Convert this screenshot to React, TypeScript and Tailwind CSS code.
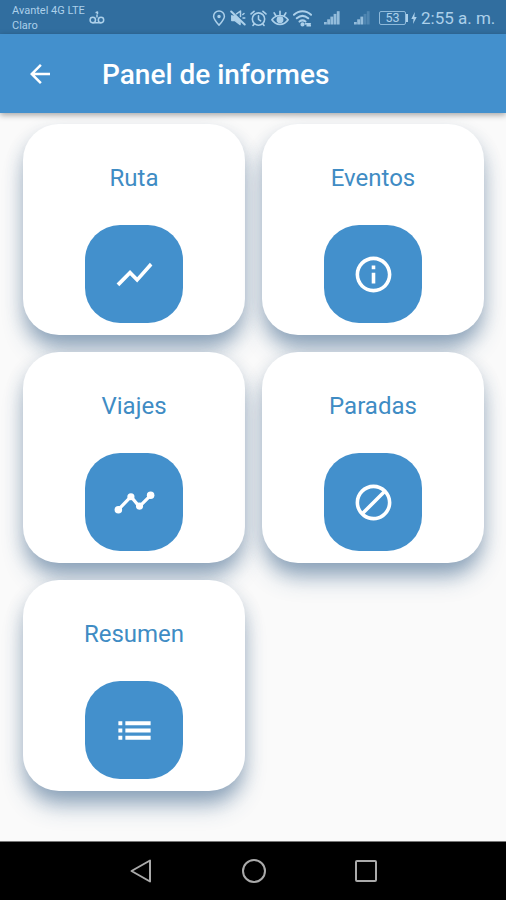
import type { ReactNode } from 'react';
import { MdArrowBack, MdDoNotDisturbAlt, MdInfoOutline, MdShowChart } from 'react-icons/md';

const TimelineIcon = ({ className }: { className: string }) => (
  <svg viewBox="0 0 24 24" className={className} fill="currentColor">
    <path d="M3 16l7-7.300 4.700 5.600L21 8" fill="none" stroke="currentColor" strokeWidth="1.8" strokeLinejoin="round" />
    <circle cx="3" cy="16" r="2.1" />
    <circle cx="10" cy="8.8" r="2" />
    <circle cx="14.8" cy="14" r="2" />
    <circle cx="21" cy="8" r="2.1" />
  </svg>
);

const ListIcon = ({ className }: { className: string }) => (
  <svg viewBox="0 0 24 24" className={className} fill="currentColor">
    <path d="M3 6.850h2.200v2.200H3zM3 10.900h2.200v2.200H3zM3 14.950h2.200v2.200H3zM6.900 6.850H21v2.200H6.900zM6.900 10.900H21v2.200H6.900zM6.900 14.950H21v2.200H6.900z" />
  </svg>
);

const reports = [
  { title: 'Ruta', icon: MdShowChart },
  { title: 'Eventos', icon: MdInfoOutline },
  { title: 'Viajes', icon: TimelineIcon },
  { title: 'Paradas', icon: MdDoNotDisturbAlt },
  { title: 'Resumen', icon: ListIcon },
];

const StatusIcon = ({ className, children }: { className: string; children: ReactNode }) => (
  <svg
    viewBox="0 0 16 16"
    className={`shrink-0 ${className}`}
    fill="none"
    stroke="currentColor"
    strokeWidth="1.5"
    strokeLinecap="round"
    strokeLinejoin="round"
  >
    {children}
  </svg>
);

const SignalBars = ({ level }: { level: number }) => (
  <svg viewBox="0 0 18 16" className="h-4 w-[18px] shrink-0" fill="currentColor">
    {[0, 1, 2, 3, 4].map((i) => (
      <rect key={i} x={1 + i * 3.2} y={12 - i * 2.7} width="2.8" height={2.5 + i * 2.7} opacity={i < level ? 0.8 : 0.25} />
    ))}
  </svg>
);

const StatusBar = () => (
  <div className="flex h-[34px] shrink-0 items-start bg-[#316e9f] text-[#acd0ea]">
    <div className="ml-3 mt-[3px] w-[76px] whitespace-nowrap text-[11px] leading-[15px]">
      <div>Avantel 4G LTE</div>
      <div>Claro</div>
    </div>
    {/* voicemail */}
    <StatusIcon className="ml-px mt-[9px] size-4">
      <circle cx="3.8" cy="11" r="2.7" />
      <circle cx="12" cy="11" r="2.7" />
      <path d="M3.8 13.7H12M8 8V6M7.2 3.5l1.3-.5v1.6" />
    </StatusIcon>
    <div className="ml-[106px] mt-[9px] flex h-[18px] items-center">
      <StatusIcon className="size-4">
        <path d="M8 15.2C5 11.7 2.6 9 2.6 6.4a5.4 5.4 0 0 1 10.8 0C13.4 9 11 11.7 8 15.2z" />
        <circle cx="8" cy="6.5" r="1" fill="currentColor" />
      </StatusIcon>
      <StatusIcon className="ml-[3px] size-4">
        <path d="M1.2 1.5l13.5 13" strokeWidth="2" />
        <path d="M6.5 3.8L10.5 1v5.5M1.8 5.8v4.7h3l5.2 4V11M12.8 4.5l1.2-1M13 8h1.8" />
        <path d="M2 5.5h3L10 10v4l-5-3.5H2z" fill="currentColor" stroke="none" />
      </StatusIcon>
      <StatusIcon className="ml-[4px] size-[17px]">
        <circle cx="8" cy="8.5" r="5.8" />
        <path d="M8 5.5v3.3l2 1.4M1 3.7l2.8-2.4M15 3.7l-2.8-2.4M3.8 13.3l-1 1.2M12.2 13.3l1 1.2" />
      </StatusIcon>
      <StatusIcon className="ml-[4px] size-[18px]">
        <path d="M.8 9.5C4.5 4.5 11.5 4.5 15.2 9.5 11.5 15 4.5 15 .8 9.5zM8 2v3M2.8 3.5l1.5 2.5M13.2 3.5l-1.5 2.5" />
        <circle cx="8" cy="9.5" r="2.3" fill="currentColor" />
      </StatusIcon>
      <StatusIcon className="ml-[4px] size-[19px]">
        <path d="M.8 4.8C5 .8 11 .8 15.2 4.8M3.2 7.8c3-2.5 6.6-2.5 9.6 0M5.5 10.6c1.6-1.3 3.4-1.3 5 0" strokeWidth="1.7" />
        <circle cx="8" cy="13" r="1" fill="currentColor" />
        <path d="M10.5 12.5h4M12 14h2.5" />
      </StatusIcon>
      <div className="ml-[11px]">
        <SignalBars level={5} />
      </div>
      <div className="ml-[12px]">
        <SignalBars level={3} />
      </div>
    </div>
    {/* battery */}
    <div className="ml-[8px] mt-[11px] flex h-[14px] items-center">
      <div className="flex h-[14px] w-[27px] items-center justify-center rounded-[2px] border border-[#8db9da] text-[12.5px] leading-none">
        53
      </div>
      <div className="h-2 w-[2px] bg-[#acd0ea]" />
      <svg viewBox="0 0 6 12" className="ml-[3px] h-3 w-[6px]" fill="currentColor">
        <path d="M3.8 0L.3 7h2.2l-.5 5L5.7 5H3.4z" />
      </svg>
    </div>
    <div className="ml-[4px] mt-[8px] whitespace-nowrap text-[17px] leading-[20px]">2:55 a. m.</div>
  </div>
);

const AppBar = () => (
  <header className="relative z-10 flex h-[79px] shrink-0 items-center bg-[#4390cd] text-white shadow-[0_2px_6px_rgba(0,0,0,0.35)]">
    <MdArrowBack className="ml-[25px] size-[30px]" />
    <h1 className="ml-[47px] mt-[3px] whitespace-nowrap text-[28px] font-medium leading-8">Panel de informes</h1>
  </header>
);

const ReportCard = ({ title, icon: Icon }: (typeof reports)[number]) => (
  <div className="flex h-[211px] flex-col items-center rounded-[36px] bg-white shadow-[0_18px_24px_-5px_rgba(49,94,138,0.45),0_8px_18px_rgba(49,84,118,0.24)]">
    <span className="mt-[38px] text-2xl text-[#3f8cc4]">{title}</span>
    <div className="mt-[31px] flex size-[98px] items-center justify-center rounded-[35px] bg-[#4390cc] text-white">
      <Icon className="size-[43px]" />
    </div>
  </div>
);

const NavBar = () => (
  <nav className="flex h-[59px] shrink-0 items-center border-t border-[#777] bg-black text-[#aaa]">
    <svg viewBox="0 0 24 26" className="ml-[129px] h-[26px] w-6" fill="none" stroke="currentColor" strokeWidth="2" strokeLinejoin="round">
      <path d="M21 2.5v21L2.5 13z" />
    </svg>
    <div className="ml-[89px] size-6 rounded-full border-2 border-current" />
    <div className="ml-[89px] size-[22px] rounded-[2px] border-2 border-current" />
  </nav>
);

export default function App() {
  return (
    <div className="flex h-[900px] w-[506px] flex-col overflow-hidden bg-[#fafafa] font-['Roboto',sans-serif]">
      <StatusBar />
      <AppBar />
      <main className="grid flex-1 auto-rows-[211px] grid-cols-2 gap-[17px] pl-[23px] pr-[22px] pt-[11px]">
        {reports.map((report) => (
          <ReportCard key={report.title} {...report} />
        ))}
      </main>
      <NavBar />
    </div>
  );
}
